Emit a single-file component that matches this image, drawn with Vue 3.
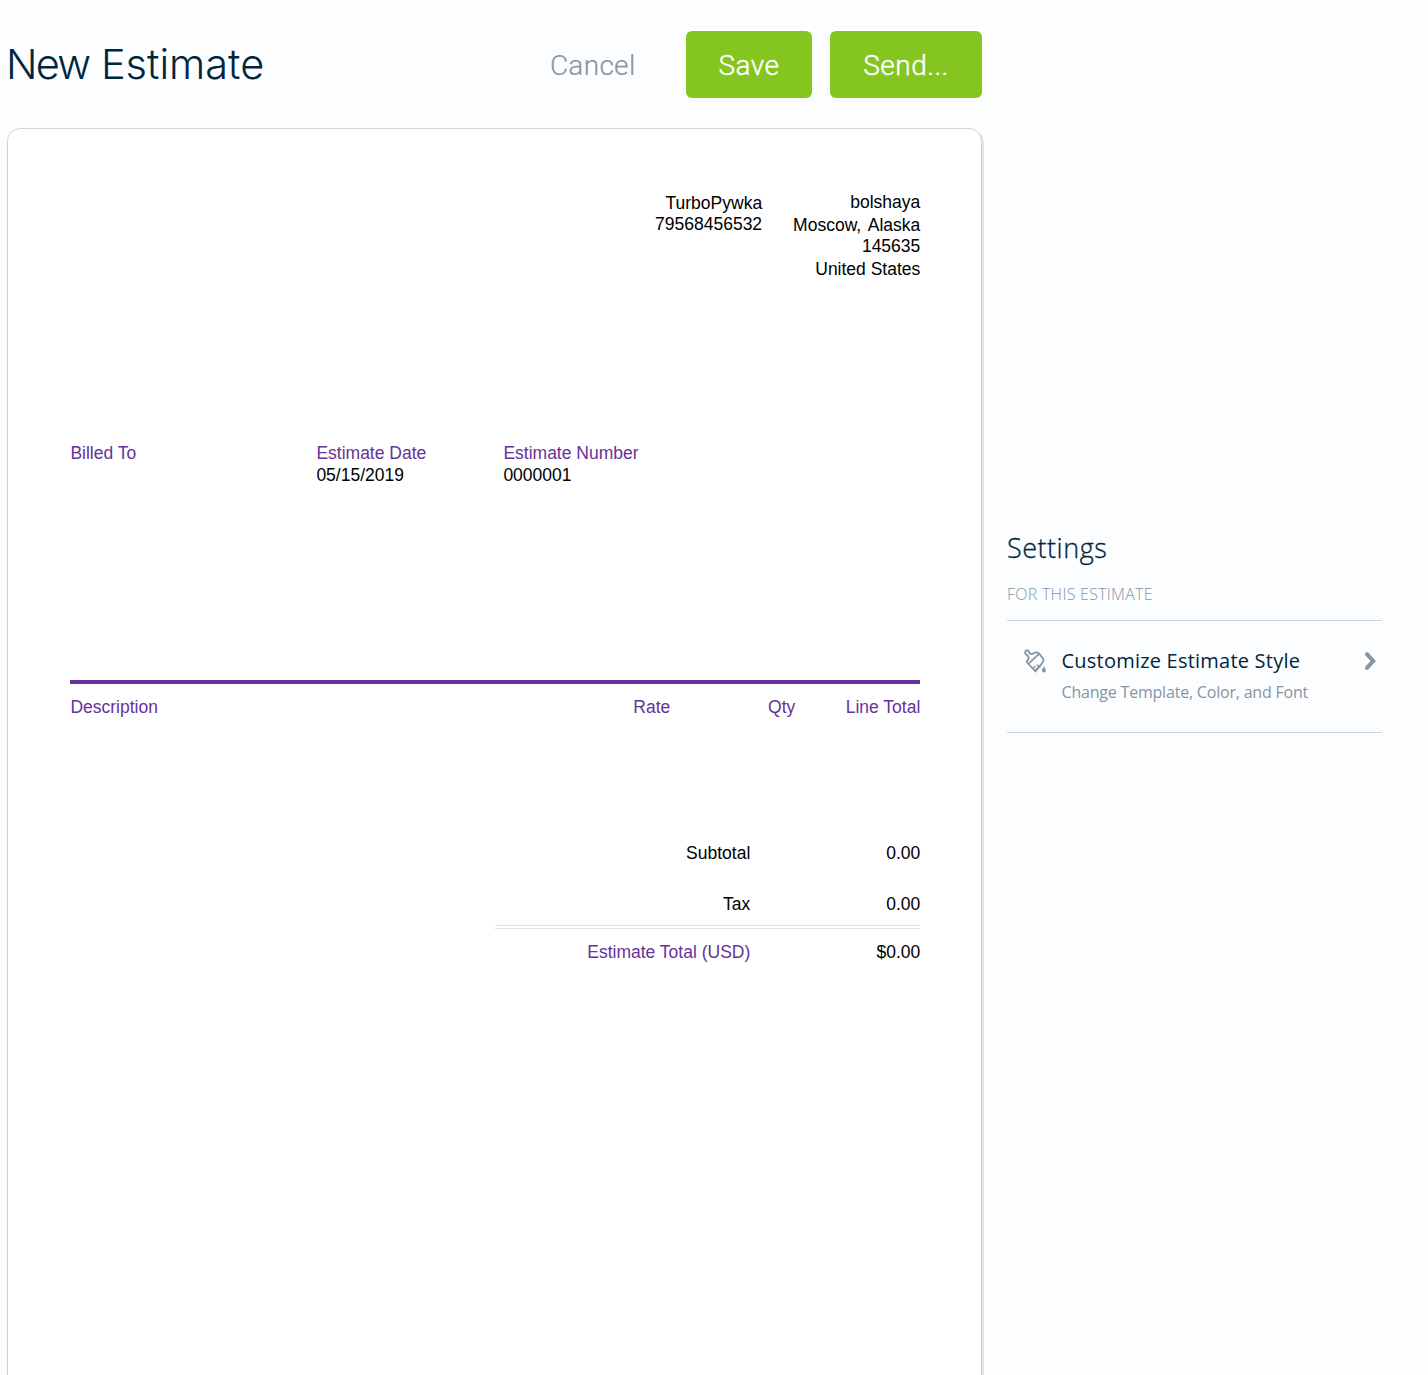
<script setup>
const contact = ['TurboPywka', '79568456532']
const address = ['bolshaya', 'Moscow, Alaska', '145635', 'United States']
const totals = [
  { label: 'Subtotal', value: '0.00' },
  { label: 'Tax', value: '0.00' },
]
</script>

<template>
  <div class="page">
    <main class="main">
      <header class="header">
        <h1><span class="tight">New</span> Estimate</h1>
        <div class="actions">
          <a class="cancel">Cancel</a>
          <button class="btn save">Save</button>
          <button class="btn send">Send...</button>
        </div>
      </header>

      <section class="sheet">
        <div class="company">
          <div class="contact">
            <div v-for="line in contact" :key="line">{{ line }}</div>
          </div>
          <div class="address">
            <div v-for="line in address" :key="line">{{ line }}</div>
          </div>
        </div>

        <div class="meta">
          <div class="billed"><div class="label">Billed To</div></div>
          <div class="date"><div class="label">Estimate Date</div><div class="val">05/15/2019</div></div>
          <div><div class="label">Estimate Number</div><div class="val">0000001</div></div>
        </div>

        <div class="items label">
          <span class="desc">Description</span>
          <span class="rate">Rate</span>
          <span class="qty">Qty</span>
          <span class="total">Line Total</span>
        </div>

        <div class="totals">
          <div v-for="row in totals" :key="row.label" class="row">
            <span class="name">{{ row.label }}</span><span class="amount">{{ row.value }}</span>
          </div>
          <div class="row grand">
            <span class="name label">Estimate Total (USD)</span><span class="amount">$0.00</span>
          </div>
        </div>
      </section>
    </main>

    <aside class="settings">
      <h2>Settings</h2>
      <div class="scope">For this estimate</div>
      <div class="option">
        <svg class="brush" width="24" height="24" viewBox="0 0 24 24" fill="none" stroke="#8496a3" stroke-width="1.8" stroke-linecap="round" stroke-linejoin="round">
          <path d="M3.6 13 C4.2 11.5 5.6 10.6 5.7 9 C5.8 7.6 4.4 6.2 2.8 5.3 A2.3 2.3 0 0 1 4.7 1.3 C6.2 2.2 6.2 4.3 7.6 5 C9.6 5.6 11.7 2.8 14.2 3.4 C15.8 4 19.6 8.3 20.4 10.2 C20.8 11.6 20.2 13 19.2 14.1 L12.4 22.5 Z" />
          <path d="M6.3 13.9 L15.8 5.2" />
          <path d="M9.9 19.2 L12.1 17.2 M12 21.4 L14.8 18.6 M14.4 16.1 L17 18.3" stroke-width="1.4" />
          <path d="M20.9 17.4 C21.8 18.8 22.9 19.9 22.9 21.4 A2 2 0 0 1 18.9 21.4 C18.9 19.9 20 18.8 20.9 17.4 Z" fill="#8496a3" stroke="none" />
        </svg>
        <div class="text">
          <div class="title">Customize Estimate Style</div>
          <div class="sub">Change Template, Color, and Font</div>
        </div>
        <svg class="chevron" width="14" height="20" viewBox="0 0 14 20" fill="none" stroke="#8496a3" stroke-width="4" stroke-linecap="round" stroke-linejoin="miter">
          <path d="M3 3.2 L9.2 10 L3 16.8" />
        </svg>
      </div>
    </aside>
  </div>
</template>

<style>
body {
  background: #fcfdff;
}
</style>

<style scoped>
.page {
  display: flex;
  width: 1428px;
  height: 1375px;
  overflow: hidden;
  background: #fcfdff;
  font-family: "Open Sans", sans-serif;
}
.main {
  display: flex;
  flex-direction: column;
  width: 975px;
  padding-left: 7px;
}
.header {
  display: flex;
  justify-content: space-between;
  height: 67px;
  padding: 31px 0 30px;
}
h1,
h2 {
  margin: 0;
  font-weight: 300;
  white-space: nowrap;
}
h1 {
  margin-left: -1px;
  color: #00263e;
  font-family: Inter, sans-serif;
  font-size: 41.5px;
  letter-spacing: 0;
  line-height: 67px;
}
.tight {
  letter-spacing: -1.8px;
}
.actions {
  display: flex;
  font-family: Roboto, sans-serif;
  font-size: 28px;
  letter-spacing: 0.3px;
  line-height: 68px;
}
.cancel {
  margin-right: 50.5px;
  padding-top: 1px;
  color: #8496a3;
  font-weight: 300;
  -webkit-text-stroke: 0.2px #8496a3;
}
.btn {
  height: 67px;
  padding: 1px 0 0;
  border: 0;
  border-radius: 6px;
  background: #85c520;
  color: #fff;
  font: inherit;
  font-weight: 300;
  letter-spacing: 0.5px;
  text-align: center;
  -webkit-text-stroke: 0.4px #fff;
}
.save {
  width: 126px;
  margin-right: 18px;
}
.send {
  width: 152px;
}
.sheet {
  flex: 1;
  box-sizing: border-box;
  margin-bottom: -20px;
  padding: 63px 60.7px 0 62px;
  border: 1px solid #cdd4d9;
  border-radius: 13px;
  background: #fff;
  box-shadow: 2px 2px 0 #e1e6ea;
  color: #000;
  font-family: "Liberation Sans", Arial, sans-serif;
  font-size: 17.5px;
  line-height: 20px;
}
.label {
  color: #663399;
}
.company {
  display: flex;
  justify-content: flex-end;
  gap: 31px;
  height: 251px;
  text-align: right;
}
.contact {
  padding-top: 1px;
}
.contact div + div,
.address div:nth-child(3) {
  margin-top: 1px;
}
.address div:nth-child(even) {
  margin-top: 3px;
}
.address div:nth-child(2) {
  word-spacing: 2.7px;
}
.meta {
  display: flex;
  height: 237px;
  padding-left: 0.4px;
}
.billed {
  width: 246px;
}
.date {
  width: 187px;
}
.val {
  margin-top: 2px;
}
.items {
  display: flex;
  height: 133px;
  padding-top: 13px;
  border-top: 4px solid #663399;
}
.desc {
  flex: 1;
  padding-left: 0.4px;
}
.rate,
.qty,
.total {
  text-align: right;
}
.qty,
.total {
  width: 125px;
}
.totals {
  width: 425px;
  margin: 13px 0 0 auto;
}
.row {
  display: flex;
  height: 51px;
  text-align: right;
}
.row:nth-child(2) {
  height: 31px;
}
.name {
  width: 255px;
}
.amount {
  width: 170px;
}
.grand {
  padding-top: 13px;
  border-top: 4px double #e0e0e0;
}
.settings {
  width: 375px;
  padding: 528px 0 0 25px;
}
h2 {
  color: #00263e;
  font-size: 27px;
  letter-spacing: 0.5px;
  line-height: 40px;
  -webkit-text-stroke: 0.3px #00263e;
}
.scope {
  height: 36px;
  padding-top: 16px;
  border-bottom: 1px solid #cdd4d9;
  color: #8496a3;
  font-size: 16px;
  font-weight: 300;
  letter-spacing: 0.26px;
  line-height: 20px;
  text-transform: uppercase;
}
.option {
  display: flex;
  height: 111px;
  border-bottom: 1px solid #cdd4d9;
}
.brush {
  margin: 28px 0 0 16px;
}
.text {
  flex: 1;
  margin-left: 14.5px;
  white-space: nowrap;
}
.title {
  padding-top: 25px;
  color: #00263e;
  font-size: 20px;
  letter-spacing: 0.22px;
  line-height: 30px;
}
.sub {
  padding-top: 6px;
  color: #8496a3;
  font-size: 16px;
  letter-spacing: -0.2px;
  line-height: 20px;
}
.chevron {
  margin: 30px 4px 0 0;
}
</style>
